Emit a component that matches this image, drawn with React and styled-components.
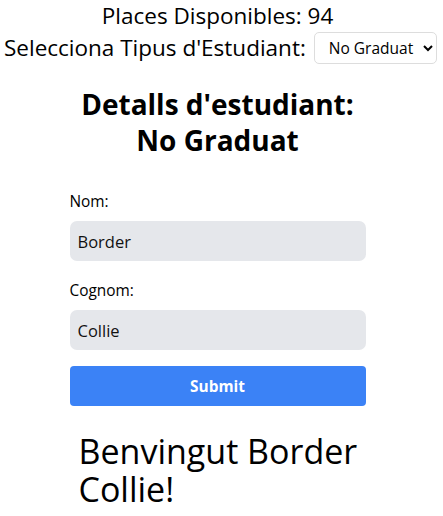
import React, { useState } from 'react';
import styled, { createGlobalStyle } from 'styled-components';

const Global = createGlobalStyle`
  body {
    margin: 0;
    font-family: "Open Sans", "Noto Sans", sans-serif;
    color: #000;
    background: #fff;
  }
`;

const Page = styled.div`
  width: 435px;
  display: flex;
  flex-direction: column;
  align-items: center;
`;

const Places = styled.div`
  font-size: 22.5px;
  line-height: 32px;
`;

const TypeRow = styled.div`
  align-self: flex-start;
  margin-left: 4px;
  display: flex;
  align-items: center;
  gap: 8px;
  font-size: 22.5px;
  line-height: 32px;
  white-space: nowrap;
`;

const Select = styled.select`
  flex-shrink: 0;
  font-family: inherit;
  font-size: 15.5px;
  width: 123px;
  height: 32px;
  padding: 0 4px 0 10px;
  border: 1px solid #ddd;
  border-radius: 5px;
  background: #fff;
  color: #000;
`;

const Title = styled.h2`
  margin: 22px 0 0;
  font-size: 28px;
  line-height: 36px;
  font-weight: 700;
  text-align: center;
`;

const Form = styled.form`
  width: 296px;
  margin-top: 34px;
  display: flex;
  flex-direction: column;
`;

const Label = styled.label`
  font-size: 15.4px;
  line-height: 20px;
  margin-bottom: 9px;
`;

const Input = styled.input`
  height: 40px;
  border: none;
  border-radius: 7px;
  background: #e5e7eb;
  padding: 0 8px;
  font-family: inherit;
  font-size: 16.5px;
  color: #111;
  margin-bottom: ${p => p.$gap}px;
  outline: none;
`;

const Button = styled.button`
  height: 40px;
  border: none;
  border-radius: 4px;
  background: #3b82f6;
  color: #fff;
  font-family: inherit;
  font-weight: 700;
  font-size: 15.4px;
`;

const Welcome = styled.h1`
  width: 296px;
  margin: 26px 0 0;
  padding-left: 18px;
  font-size: 34px;
  line-height: 38px;
  font-weight: 400;
`;

export default function App() {
  const [nom, setNom] = useState('Border');
  const [cognom, setCognom] = useState('Collie');
  return (
    <Page>
      <Global />
      <Places>Places Disponibles: 94</Places>
      <TypeRow>
        Selecciona Tipus d'Estudiant:
        <Select defaultValue="ng">
          <option value="ng">No Graduat</option>
          <option value="g">Graduat</option>
        </Select>
      </TypeRow>
      <Title>Detalls d'estudiant:<br />No Graduat</Title>
      <Form onSubmit={e => e.preventDefault()}>
        <Label>Nom:</Label>
        <Input $gap={20} value={nom} onChange={e => setNom(e.target.value)} />
        <Label>Cognom:</Label>
        <Input $gap={16} value={cognom} onChange={e => setCognom(e.target.value)} />
        <Button type="submit">Submit</Button>
      </Form>
      <Welcome>Benvingut {nom} {cognom}!</Welcome>
    </Page>
  );
}
